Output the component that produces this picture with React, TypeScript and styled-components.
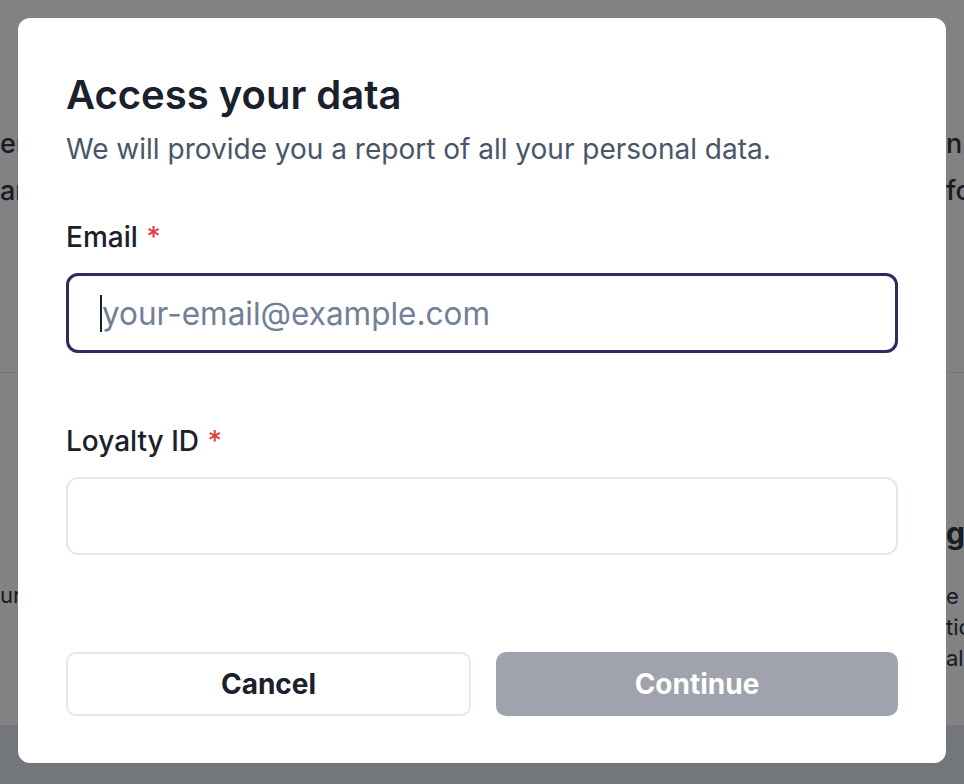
import styled, { createGlobalStyle } from "styled-components";

const GlobalStyle = createGlobalStyle`
  html, body {
    margin: 0;
    padding: 0;
    font-family: Inter, "Noto Sans", sans-serif;
    background: #edf2f7;
  }
  * { box-sizing: border-box; }
`;

export default function App() {
  return (
    <>
      <GlobalStyle />
      <Page>
        <Hero>
          <Edge>
            <HeroLine>en</HeroLine>
            <HeroLine>ar</HeroLine>
          </Edge>
          <Edge>
            <HeroLine>n</HeroLine>
            <HeroLine>fo</HeroLine>
          </Edge>
        </Hero>
        <Cards>
          <Edge $offset>
            <CardText>ur</CardText>
          </Edge>
          <Edge>
            <CardTitle>g</CardTitle>
            <CardText>e</CardText>
            <CardText>tic</CardText>
            <CardText>al</CardText>
          </Edge>
        </Cards>
        <Footer />
      </Page>

      <Overlay>
        <Modal>
          <Title>Access your data</Title>
          <Subtitle>We will provide you a report of all your personal data.</Subtitle>

          <Field>
            <Label>
              Email <Required>*</Required>
            </Label>
            <InputWrap>
              <Input $focused placeholder="your-email@example.com" />
              <Caret />
            </InputWrap>
          </Field>

          <Field $gap>
            <Label>
              Loyalty ID <Required>*</Required>
            </Label>
            <Input />
          </Field>

          <Actions>
            <Button>Cancel</Button>
            <Button $primary disabled>
              Continue
            </Button>
          </Actions>
        </Modal>
      </Overlay>
    </>
  );
}

const Page = styled.div`
  width: 964px;
  height: 784px;
  overflow: hidden;
  display: flex;
  flex-direction: column;
  background: #fff;
`;

const Hero = styled.div`
  height: 373px;
  display: flex;
  justify-content: space-between;
  padding-top: 120px;
  border-bottom: 1px solid #e2e8f0;
`;

// slivers of the page content peeking out beside the dialog
const Edge = styled.div<{ $offset?: boolean }>`
  width: 18px;
  white-space: nowrap;
  color: #2d3748;
  display: flex;
  flex-direction: column;
  margin-top: ${(p) => (p.$offset ? "69px" : "0")};
`;

const HeroLine = styled.div`
  font-size: 27px;
  font-weight: 500;
  line-height: 47px;
`;

const Cards = styled.div`
  height: 352px;
  display: flex;
  justify-content: space-between;
  align-items: flex-start;
  padding-top: 138px;
  background: #fff;
`;

const CardTitle = styled.div`
  font-size: 30px;
  font-weight: 700;
  line-height: 44px;
  margin-bottom: 26px;
`;

const CardText = styled.div`
  font-size: 22px;
  line-height: 31px;
`;

const Footer = styled.div`
  flex: 1;
  background: #e2e8f0;
`;

const Overlay = styled.div`
  position: fixed;
  inset: 0;
  background: rgba(0, 0, 0, 0.49);
  display: flex;
  align-items: flex-start;
  padding: 18px;
`;

const Modal = styled.div`
  width: 100%;
  height: 745px;
  background: #fff;
  border-radius: 12px;
  padding: 54px 48px 47px;
  display: flex;
  flex-direction: column;
`;

const Title = styled.h2`
  margin: 0;
  font-size: 40px;
  line-height: 46px;
  font-weight: 600;
  color: #1a202c;
`;

const Subtitle = styled.p`
  margin: 14px 0 0;
  font-size: 28px;
  line-height: 34px;
  color: #4a5568;
`;

const Field = styled.div<{ $gap?: boolean }>`
  margin-top: ${(p) => (p.$gap ? "71px" : "54px")};
  display: flex;
  flex-direction: column;
  gap: 19px;
`;

const Label = styled.label`
  font-size: 28px;
  line-height: 34px;
  font-weight: 500;
  color: #1a202c;
`;

const Required = styled.span`
  color: #e53e3e;
  margin-left: 1px;
`;

const InputWrap = styled.div`
  position: relative;
`;

const Caret = styled.span`
  position: absolute;
  left: 34px;
  top: 22px;
  width: 2px;
  height: 37px;
  background: #1a202c;
`;

const Input = styled.input<{ $focused?: boolean }>`
  display: block;
  width: 100%;
  height: ${(p) => (p.$focused ? "80px" : "78px")};
  border: ${(p) => (p.$focused ? "3px solid #2b2d5c" : "2px solid #e2e8f0")};
  border-radius: 12px;
  padding: 0 ${(p) => (p.$focused ? "33px" : "34px")};
  font-family: Inter, "Noto Sans", sans-serif;
  font-size: 31.5px;
  color: #1a202c;
  outline: none;

  &::placeholder {
    color: #718096;
  }
`;

const Actions = styled.div`
  margin-top: auto;
  display: grid;
  grid-template-columns: 405px 1fr;
  gap: 25px;
`;

const Button = styled.button<{ $primary?: boolean }>`
  height: 64px;
  border-radius: 10px;
  font-family: Inter, "Noto Sans", sans-serif;
  font-size: 28px;
  font-weight: 700;
  border: ${(p) => (p.$primary ? "none" : "2px solid #e2e8f0")};
  background: ${(p) => (p.$primary ? "#a0a2ae" : "#fff")};
  color: ${(p) => (p.$primary ? "#fff" : "#1a202c")};
  cursor: pointer;
`;
